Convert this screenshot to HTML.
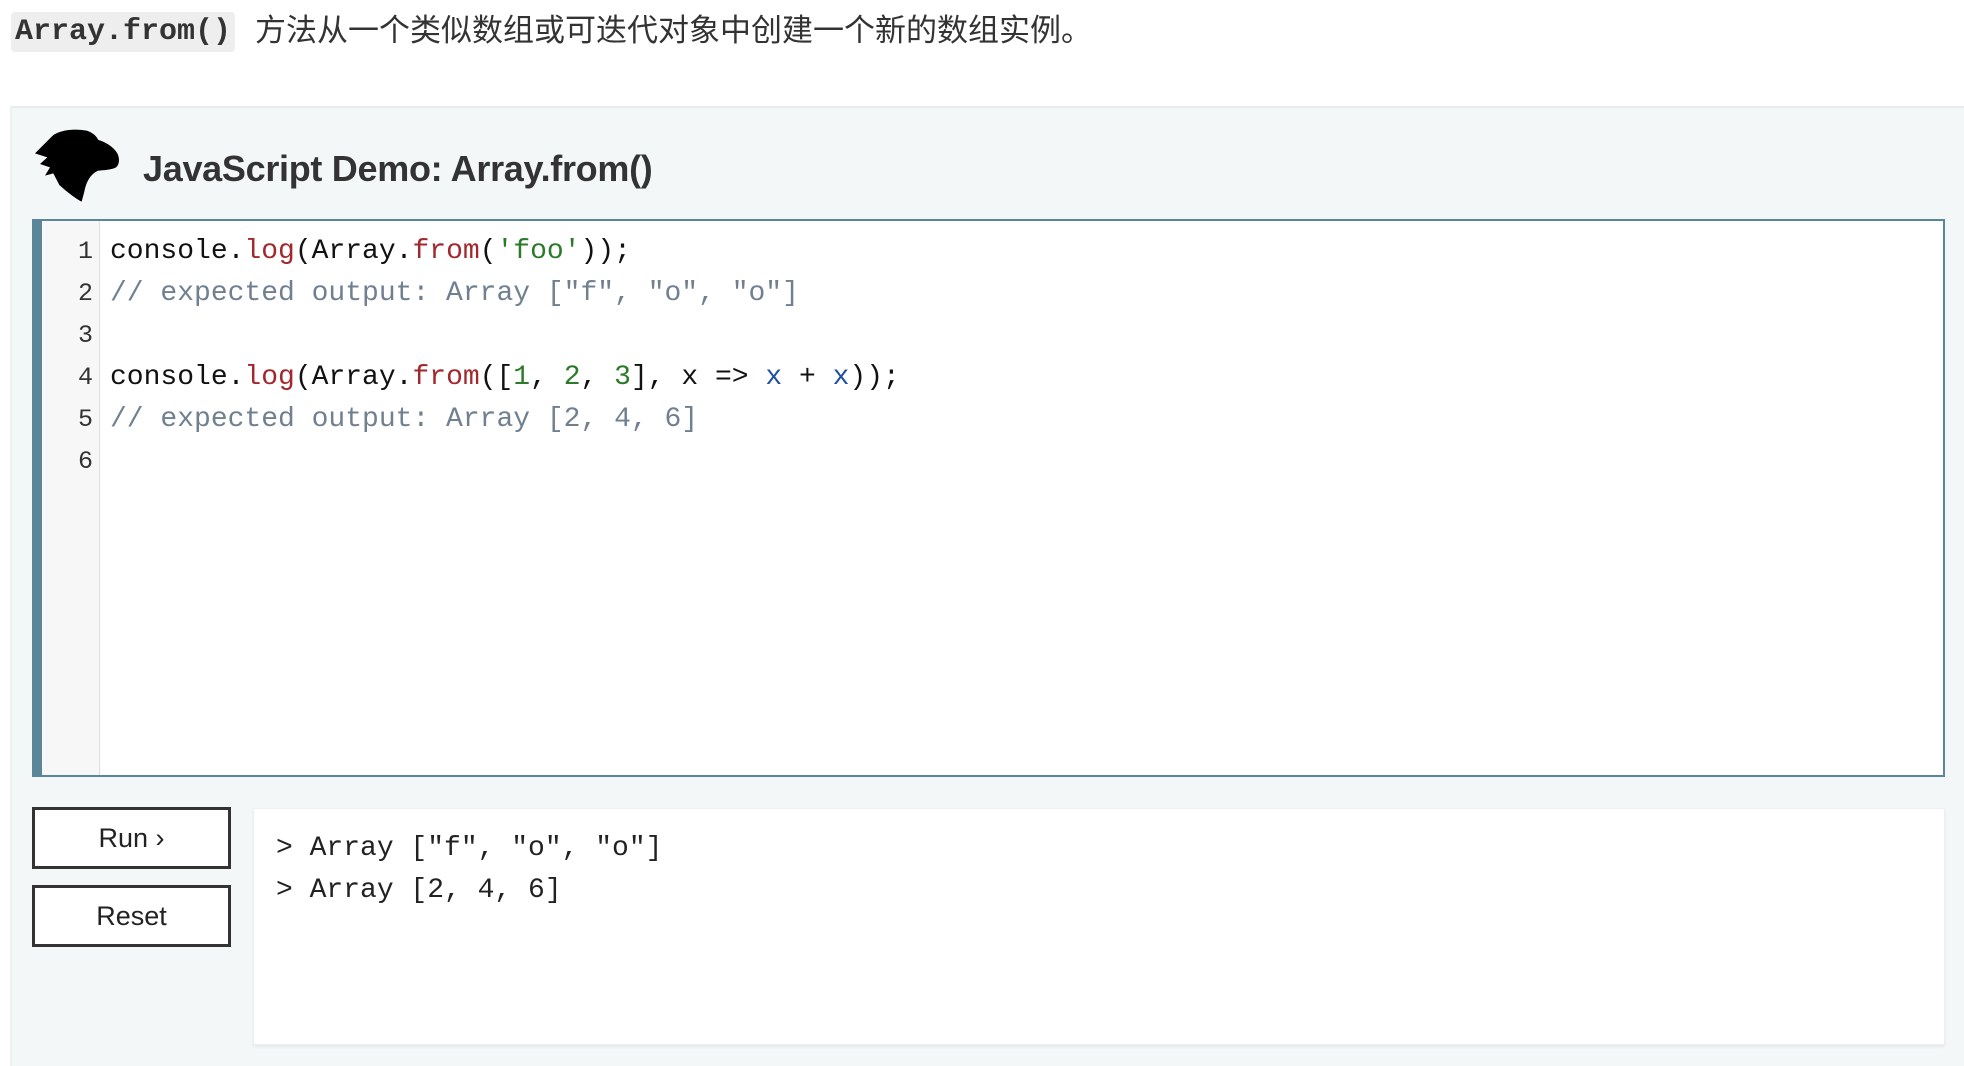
<!DOCTYPE html>
<html><head><meta charset="utf-8">
<style>
*{margin:0;padding:0;box-sizing:border-box}
body{width:1964px;height:1066px;background:#fff;position:relative;overflow:hidden;font-family:"Liberation Sans","Noto Sans CJK SC",sans-serif;color:#333}
.abs{position:absolute}
.chip{left:11px;top:12px;height:40px;padding:0 4px;background:#eee;border-radius:4px;font:bold 30px/40px "Liberation Mono",monospace;color:#333}
.desc{left:255px;top:11px;font-size:31px;line-height:40px;color:#333}
.panel{left:10px;top:106px;width:1954px;height:960px;background:#f4f7f8;border-top:2px solid #e8eced;border-left:2px solid #eef1f2}
.title{left:143px;top:146px;font-weight:bold;font-size:36px;line-height:46px;color:#333;letter-spacing:-0.3px}
.editor{left:32px;top:219px;width:1913px;height:558px;background:#fff;border:2px solid #5b8699;border-left:10px solid #5b8699}
.gutter{position:absolute;left:0;top:0;width:58px;height:100%;background:#f7f7f7;border-right:1px solid #ddd}
.ln{position:absolute;right:6px;font:25px/42px "Liberation Mono",monospace;color:#333;text-align:right}
.code{position:absolute;left:68px;top:10px;font:28px/42px "Liberation Mono",monospace;color:#111;white-space:pre}
.k{color:#a3282e}.s{color:#2a7a2a}.c{color:#708090}.v{color:#1f4fa0}.n{color:#2a7a2a}
.btn{left:32px;width:199px;height:62px;border:3px solid #333;background:#fff;font-size:27px;text-align:center;line-height:56px;color:#222}
.out{left:253px;top:808px;width:1692px;height:237px;background:#fff;border:1px solid #edf0f1;box-shadow:0 2px 3px rgba(0,0,0,.06)}
.ol{position:absolute;left:22px;font:28px/42px "Liberation Mono",monospace;color:#222;white-space:pre}
</style></head><body>
<div class="abs chip">Array.from()</div>
<div class="abs desc">方法从一个类似数组或可迭代对象中创建一个新的数组实例。</div>
<div class="abs panel"></div>
<svg class="abs" style="left:30px;top:120px" width="100" height="90" viewBox="0 0 300 270"><path d="M15 100 L70 45 C95 30 130 25 170 32 C190 38 200 50 205 60 C225 65 250 80 262 100 C270 115 268 135 258 142 C245 150 220 150 205 152 C185 160 170 180 163 215 L155 245 C140 238 110 215 88 195 L70 160 L45 167 L60 142 L30 132 L52 112 Z" fill="#000"/></svg>
<div class="abs title">JavaScript Demo: Array.from()</div>
<div class="abs editor">
<div class="gutter">
<div class="ln" style="top:10px">1</div><div class="ln" style="top:52px">2</div><div class="ln" style="top:94px">3</div><div class="ln" style="top:136px">4</div><div class="ln" style="top:178px">5</div><div class="ln" style="top:220px">6</div>
</div>
<div class="code">console.<span class="k">log</span>(Array.<span class="k">from</span>(<span class="s">'foo'</span>));
<span class="c">// expected output: Array ["f", "o", "o"]</span>

console.<span class="k">log</span>(Array.<span class="k">from</span>([<span class="n">1</span>, <span class="n">2</span>, <span class="n">3</span>], x =&gt; <span class="v">x</span> + <span class="v">x</span>));
<span class="c">// expected output: Array [2, 4, 6]</span>
</div>
</div>
<div class="abs btn" style="top:807px">Run ›</div>
<div class="abs btn" style="top:885px">Reset</div>
<div class="abs out">
<div class="ol" style="top:19px">&gt; Array ["f", "o", "o"]</div>
<div class="ol" style="top:61px">&gt; Array [2, 4, 6]</div>
</div>
</body></html>
